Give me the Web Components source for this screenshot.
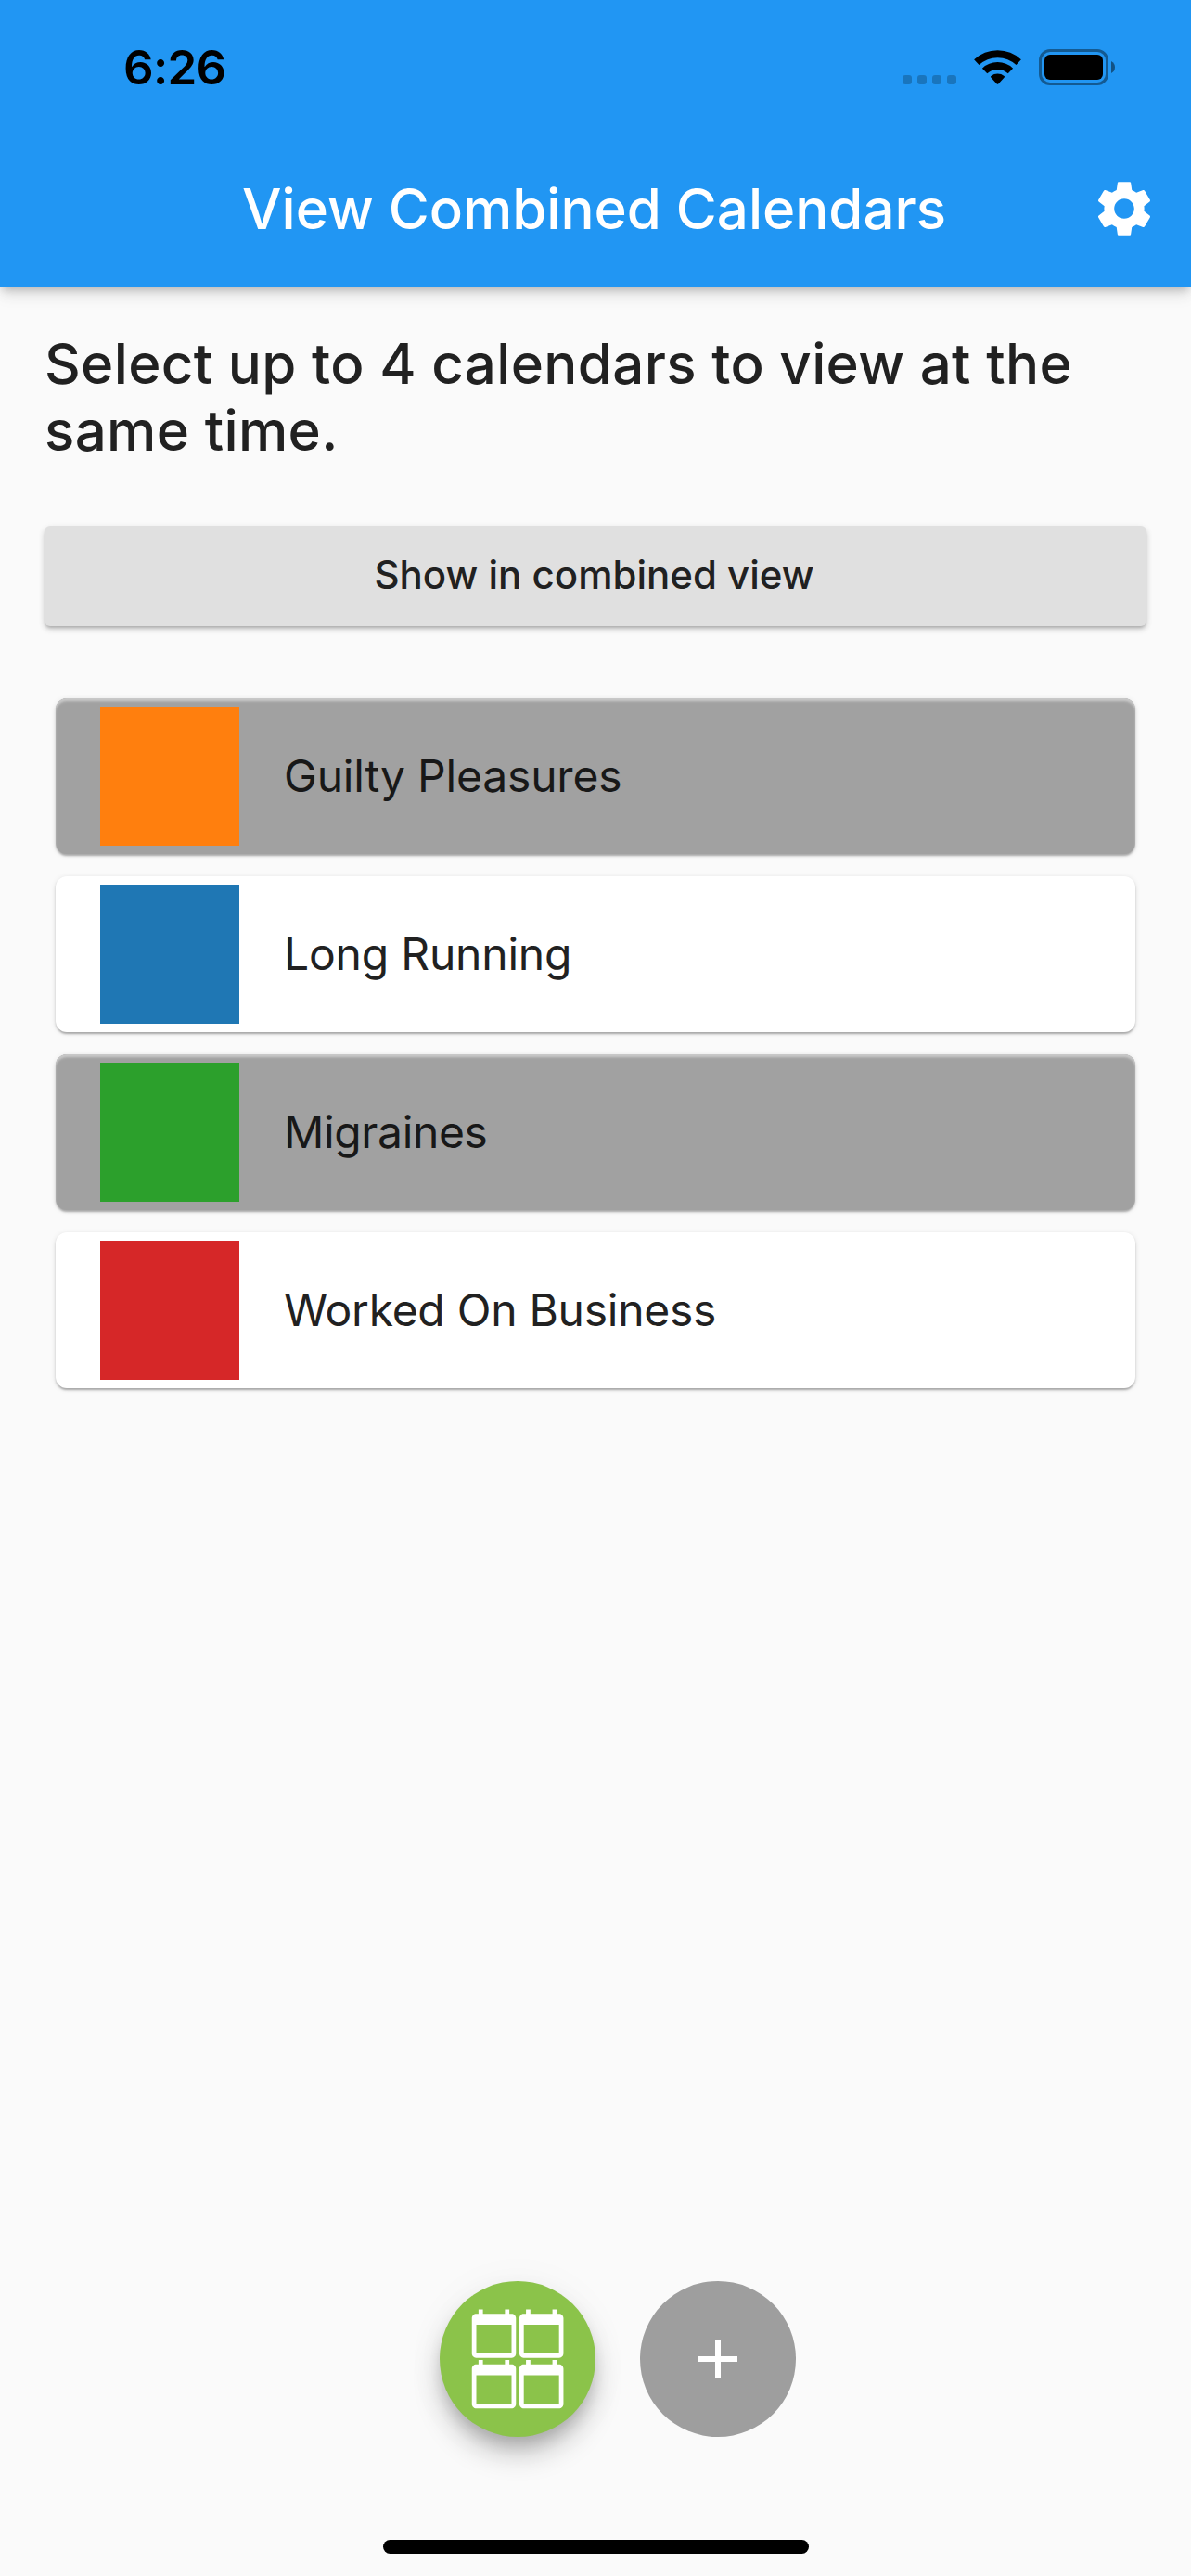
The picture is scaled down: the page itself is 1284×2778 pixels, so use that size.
<!DOCTYPE html>
<html lang="en">
<head>
<meta charset="utf-8">
<title>View Combined Calendars</title>
<style>
  html, body { margin: 0; height: 2778px; overflow: hidden; }
  body { background: #fafafa; font-family: Inter, "Liberation Sans", sans-serif; color: #212121; }
</style>
</head>
<body>
<combined-page></combined-page>
<script>
const define = (name, html) => {
  const template = document.createElement('template');
  template.innerHTML = html;
  customElements.define(name, class extends HTMLElement {
    constructor() {
      super();
      this.attachShadow({ mode: 'open' }).append(template.content.cloneNode(true));
    }
  });
};

define('status-bar', `
<style>
  :host { display: flex; box-sizing: border-box; height: 141px; padding: 42px 81px 0 133px; justify-content: space-between; align-items: flex-start; color: #000; }
  time { margin-top: 1px; font-size: 51px; font-weight: 600; line-height: 60px; letter-spacing: -0.69px; }
  svg { display: block; margin-top: 8px; }
</style>
<time>6:26</time>
<svg width="234" height="50" viewBox="969 50 234 50">
  <g fill="#000" fill-opacity=".22">
    <rect x="973" y="81" width="10" height="10" rx="3"/>
    <rect x="989" y="81" width="10" height="10" rx="3"/>
    <rect x="1005" y="81" width="10" height="10" rx="3"/>
    <rect x="1021" y="81" width="10" height="10" rx="3"/>
  </g>
  <g fill="none" stroke="#000" stroke-width="7.8">
    <path d="M1052.8 67.2A33.2 33.2 0 0 1 1098.2 67.2"/>
    <path d="M1061.6 76.5A20.3 20.3 0 0 1 1089.4 76.5"/>
  </g>
  <path d="M1068.3 83.6Q1067.5 82.8 1068.4 82.1A11.4 11.4 0 0 1 1082.6 82.1Q1083.5 82.8 1082.7 83.6L1076.3 90.4Q1075.5 91.2 1074.7 90.4Z"/>
  <rect x="1121.5" y="54.5" width="72" height="36" rx="10.5" fill="none" stroke="#000" stroke-opacity=".4" stroke-width="3"/>
  <rect x="1126" y="59" width="63" height="27" rx="6"/>
  <path d="M1198 66Q1202 68 1202 72.5T1198 79Z" fill-opacity=".45"/>
</svg>`);

define('settings-icon', `
<style>:host { display: block; width: 72px; height: 72px; } svg { display: block; }</style>
<svg width="72" height="72" viewBox="0 0 24 24" fill="currentColor"><path d="M19.14 12.94c.04-.3.06-.61.06-.94 0-.32-.02-.64-.07-.94l2.03-1.58c.18-.14.23-.41.12-.61l-1.92-3.32c-.12-.22-.37-.29-.59-.22l-2.39.96c-.5-.38-1.03-.7-1.62-.94L14.4 2.81c-.04-.24-.24-.41-.48-.41h-3.84c-.24 0-.43.17-.47.41L9.25 5.35C8.66 5.59 8.12 5.92 7.63 6.29L5.24 5.33c-.22-.08-.47 0-.59.22L2.74 8.87c-.12.21-.08.47.12.61l2.03 1.58c-.05.3-.09.63-.09.94s.02.64.07.94l-2.03 1.58c-.18.14-.23.41-.12.61l1.92 3.32c.12.22.37.29.59.22l2.39-.96c.5.38 1.03.7 1.62.94l.36 2.54c.05.24.24.41.48.41h3.84c.24 0 .44-.17.47-.41l.36-2.54c.59-.24 1.13-.56 1.62-.94l2.39.96c.22.08.47 0 .59-.22l1.92-3.32c.12-.22.07-.47-.12-.61L19.14 12.94zM12 15.6c-1.98 0-3.6-1.62-3.6-3.6s1.62-3.6 3.6-3.6 3.6 1.62 3.6 3.6-1.62 3.6-3.6 3.6z"/></svg>`);

define('app-header', `
<style>
  :host { display: block; height: 309px; background: #2196f3; color: #fff; box-shadow: 0 6px 9px -3px rgba(0,0,0,.2), 0 12px 15px rgba(0,0,0,.05), 0 3px 18px rgba(0,0,0,.09); }
  .bar { display: flex; box-sizing: border-box; height: 168px; padding: 0 36px 0 261px; align-items: center; justify-content: space-between; }
  h1 { margin: 0; font-size: 60px; font-weight: 500; line-height: 72px; letter-spacing: 0; white-space: nowrap; }
</style>
<status-bar></status-bar>
<div class="bar"><h1><slot></slot></h1><settings-icon></settings-icon></div>`);

define('raised-button', `
<style>
  :host { display: flex; height: 108px; align-items: center; justify-content: center; border-radius: 6px; background: #e0e0e0; box-shadow: 0 3px 3px -1px rgba(0,0,0,.16), 0 4px 6px rgba(0,0,0,.14), 0 2px 9px rgba(0,0,0,.06); }
  span { font-size: 42px; font-weight: 500; line-height: 50px; margin: -2px 3px 0 0; }
</style>
<span><slot></slot></span>`);

define('calendar-card', `
<style>
  :host { display: flex; box-sizing: border-box; height: 168px; padding: 0 48px; gap: 48px; align-items: center; border-radius: 12px; background: #fff; box-shadow: 0 3px 2px -1px rgba(0,0,0,.18), 0 2px 3px rgba(0,0,0,.14), 0 1px 6px rgba(0,0,0,.09); }
  :host([selected]) { background: #a1a1a1; color: #181818; box-shadow: inset 0 4px 3px -1px #c9c9c9, inset 0 2px 2px #b8b8b8, 0 3px 2px -1px rgba(0,0,0,.18), 0 2px 3px rgba(0,0,0,.14), 0 1px 6px rgba(0,0,0,.09); }
  i { flex: none; width: 150px; height: 150px; background: var(--swatch); }
  span { font-size: 48px; line-height: 58px; letter-spacing: var(--tracking, 0); }
</style>
<i></i><span><slot></slot></span>`);

define('round-button', `
<style>
  :host { display: block; width: 168px; height: 168px; border-radius: 50%; background: #9e9e9e; }
  :host([raised]) { background: #8bc34a; box-shadow: 0 12px 15px -3px rgba(0,0,0,.16), 0 20px 30px rgba(0,0,0,.18), 0 3px 48px rgba(0,0,0,.04); }
</style>
<slot></slot>`);

define('plus-icon', `
<style>:host, svg { display: block; }</style>
<svg width="168" height="168" viewBox="0 0 168 168" fill="#fff"><path d="M81 63h6v18h18v6H87v18h-6V87H63v-6h18z"/></svg>`);

define('calendars-icon', `
<style>:host, svg { display: block; }</style>
<svg width="168" height="168" viewBox="0 0 168 168" fill="#fff">
  <defs><path id="c" d="M20 3h-1V1h-2v2H7V1H5v2H4c-1.1 0-2 .9-2 2v16c0 1.1.9 2 2 2h16c1.1 0 2-.9 2-2V5c0-1.1-.9-2-2-2zm0 18H4V8h16v13z"/></defs>
  <use href="#c" transform="translate(30 28) scale(2.375)"/>
  <use href="#c" transform="translate(81.2 28) scale(2.375)"/>
  <use href="#c" transform="translate(30 82.6) scale(2.375)"/>
  <use href="#c" transform="translate(81.2 82.6) scale(2.375)"/>
</svg>`);

define('home-indicator', `
<style>:host { display: block; width: 459px; height: 15px; border-radius: 8px; background: #000; }</style>`);

define('combined-page', `
<style>
  :host { display: flex; flex-direction: column; height: 2778px; background: #fafafa; }
  app-header, main, footer { flex: none; }
  main { padding: 47px 48px 0; }
  p { margin: 0; font-size: 60px; font-weight: 500; line-height: 72px; letter-spacing: .35px; white-space: nowrap; }
  raised-button { margin-top: 67px; }
  .list { display: flex; flex-direction: column; gap: 24px; padding: 78px 12px 0; }
  footer { display: flex; flex-direction: column; align-items: center; margin-top: auto; padding-bottom: 24px; gap: 111px; }
  .actions { display: flex; gap: 48px; padding-left: 48px; }
</style>
<app-header>View Combined Calendars</app-header>
<main>
  <p>Select up to 4 calendars to view at the<br>same time.</p>
  <raised-button>Show in combined view</raised-button>
  <div class="list">
    <calendar-card selected style="--swatch:#ff7f0e;--tracking:-.18px">Guilty Pleasures</calendar-card>
    <calendar-card style="--swatch:#1f77b4;--tracking:-.2px">Long Running</calendar-card>
    <calendar-card selected style="--swatch:#2ca02c;--tracking:-.35px">Migraines</calendar-card>
    <calendar-card style="--swatch:#d62728;--tracking:-.27px">Worked On Business</calendar-card>
  </div>
</main>
<footer>
  <div class="actions">
    <round-button raised><calendars-icon></calendars-icon></round-button>
    <round-button><plus-icon></plus-icon></round-button>
  </div>
  <home-indicator></home-indicator>
</footer>`);
</script>
</body>
</html>
